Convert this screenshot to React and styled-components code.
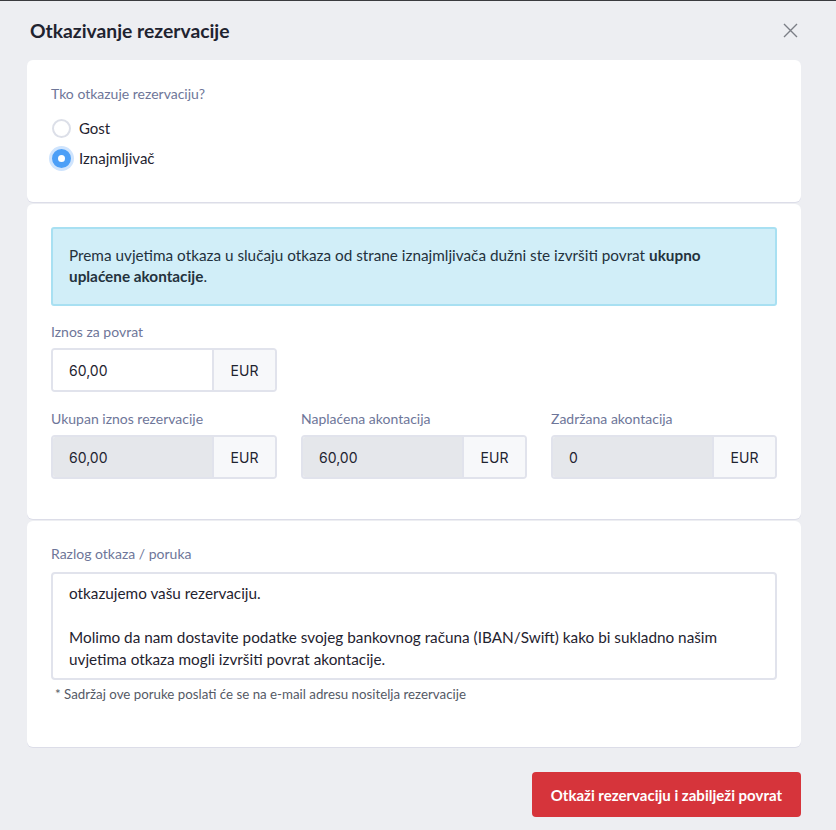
import React, { useState } from "react";
import styled, { createGlobalStyle } from "styled-components";

const GlobalStyle = createGlobalStyle`
  html, body {
    margin: 0;
    padding: 0;
    background: #edeef2;
  }
  body {
    font-family: Lato, "Open Sans", sans-serif;
    color: #1f2330;
    border-top: 1px solid #3a3b3f;
  }
  * { box-sizing: border-box; }
`;

const Modal = styled.div`
  width: 836px;
  min-height: 829px;
  padding: 0 35px 0 27px;
`;

const Header = styled.div`
  display: flex;
  align-items: center;
  justify-content: space-between;
  height: 59px;
  padding: 0 0 0 3px;
`;

const Title = styled.h2`
  margin: 0;
  font-size: 19.3px;
  font-weight: 700;
  color: #1f2330;
`;

const CloseButton = styled.button`
  background: none;
  border: none;
  padding: 0;
  margin: 0 3px 1px 0;
  width: 16px;
  height: 16px;
  cursor: pointer;
  display: flex;
  align-items: center;
  justify-content: center;
`;

const Card = styled.section`
  background: #fff;
  border-radius: 6px;
  box-shadow: 0 1px 0 #dcdde8;
  margin-bottom: 2px;
  padding: ${(p) => p.$pad || "24px"};
  min-height: ${(p) => p.$h}px;
`;

const Label = styled.div`
  font-size: 14px;
  color: #6e7699;
  margin-bottom: ${(p) => p.$mb || 7}px;
  line-height: 18px;
`;

const RadioList = styled.div`
  display: flex;
  flex-direction: column;
  gap: 10px;
`;

const RadioRow = styled.label`
  display: flex;
  align-items: center;
  gap: 8px;
  font-size: 15px;
  color: #1f2330;
  cursor: pointer;
  height: 20px;
`;

const RadioDot = styled.span`
  width: 19px;
  height: 19px;
  margin-left: 1px;
  border-radius: 50%;
  border: 2px solid ${(p) => (p.$on ? "#4c9ff7" : "#dcdfe8")};
  background: ${(p) => (p.$on ? "#4c9ff7" : "#fff")};
  box-shadow: ${(p) => (p.$on ? "0 0 0 3px #cfe4fd" : "none")};
  display: flex;
  align-items: center;
  justify-content: center;
  &::after {
    content: "";
    width: 7px;
    height: 7px;
    border-radius: 50%;
    background: #fff;
    display: ${(p) => (p.$on ? "block" : "none")};
  }
`;

const Alert = styled.div`
  background: #d1eef8;
  border: 2px solid #a8e0f2;
  border-radius: 3px;
  padding: 16px 40px 17px 16px;
  font-size: 15.3px;
  line-height: 21px;
  color: #24323d;
  margin-bottom: 17px;
  b { font-weight: 700; }
`;

const Field = styled.div`
  display: flex;
  flex-direction: column;
  min-width: 0;
  width: ${(p) => (p.$w ? `${p.$w}px` : "auto")};
`;

const InputGroup = styled.div`
  display: flex;
  height: 44px;
  border: 2px solid #e1e3ec;
  border-radius: 4px;
  overflow: hidden;
`;

const Input = styled.input`
  flex: 1;
  width: 0;
  min-width: 0;
  border: none;
  outline: none;
  padding: 0 16px;
  font-family: Inter, "Open Sans", sans-serif;
  font-size: 14px;
  color: #1f2330;
  background: ${(p) => (p.readOnly ? "#e5e7eb" : "#fff")};
`;

const Addon = styled.span`
  width: 63px;
  flex-shrink: 0;
  border-left: 2px solid #e1e3ec;
  background: #f7f8fa;
  display: flex;
  align-items: center;
  justify-content: center;
  font-family: Inter, "Open Sans", sans-serif;
  font-size: 14px;
  color: #1f2330;
`;

const Grid = styled.div`
  display: grid;
  grid-template-columns: repeat(3, minmax(0, 1fr));
  gap: 24px;
  margin-top: 18px;
`;

const TextArea = styled.textarea`
  width: 100%;
  height: 108px;
  border: 2px solid #e1e3ec;
  border-radius: 4px;
  padding: 8px 16px;
  font-family: Lato, "Open Sans", sans-serif;
  font-size: 15.3px;
  line-height: 22px;
  color: #1f2330;
  resize: none;
  outline: none;
  display: block;
`;

const Note = styled.div`
  font-size: 13.3px;
  line-height: 16px;
  color: #555a66;
  margin: 6px 0 0 4px;
`;

const Footer = styled.div`
  display: flex;
  justify-content: flex-end;
  padding-top: 23px;
`;

const DangerButton = styled.button`
  background: #d6343b;
  color: #fff;
  border: none;
  border-radius: 4px;
  height: 45px;
  padding: 0 19px;
  font-family: Lato, "Open Sans", sans-serif;
  font-size: 15px;
  font-weight: 700;
  cursor: pointer;
`;

const MoneyField = ({ label, value, readOnly, width }) => (
  <Field $w={width}>
    <Label>{label}</Label>
    <InputGroup>
      <Input defaultValue={value} readOnly={readOnly} />
      <Addon>EUR</Addon>
    </InputGroup>
  </Field>
);

const message =
  "otkazujemo vašu rezervaciju.\n\nMolimo da nam dostavite podatke svojeg bankovnog računa (IBAN/Swift) kako bi sukladno našim uvjetima otkaza mogli izvršiti povrat akontacije.";

export default function App() {
  const [who, setWho] = useState("iznajmljivac");

  return (
    <>
      <GlobalStyle />
      <Modal>
        <Header>
          <Title>Otkazivanje rezervacije</Title>
          <CloseButton aria-label="Zatvori">
            <svg width="15" height="15" viewBox="0 0 15 15">
              <path d="M1 1L14 14M14 1L1 14" stroke="#7b7e86" strokeWidth="1.4" />
            </svg>
          </CloseButton>
        </Header>

        <Card $h={142} $pad="25px 24px 20px">
          <Label $mb={15}>Tko otkazuje rezervaciju?</Label>
          <RadioList>
            <RadioRow onClick={() => setWho("gost")}>
              <RadioDot $on={who === "gost"} />
              Gost
            </RadioRow>
            <RadioRow onClick={() => setWho("iznajmljivac")}>
              <RadioDot $on={who === "iznajmljivac"} />
              Iznajmljivač
            </RadioRow>
          </RadioList>
        </Card>

        <Card $h={315} $pad="23px 24px 24px">
          <Alert>
            Prema uvjetima otkaza u slučaju otkaza od strane iznajmljivača dužni ste izvršiti povrat{" "}
            <b>ukupno uplaćene akontacije</b>.
          </Alert>
          <MoneyField label="Iznos za povrat" value="60,00" width={226} />
          <Grid>
            <MoneyField label="Ukupan iznos rezervacije" value="60,00" readOnly />
            <MoneyField label="Naplaćena akontacija" value="60,00" readOnly />
            <MoneyField label="Zadržana akontacija" value="0" readOnly />
          </Grid>
        </Card>

        <Card $h={226} $pad="24px 24px 24px">
          <Label $mb={9}>Razlog otkaza / poruka</Label>
          <TextArea defaultValue={message} />
          <Note>* Sadržaj ove poruke poslati će se na e-mail adresu nositelja rezervacije</Note>
        </Card>

        <Footer>
          <DangerButton>Otkaži rezervaciju i zabilježi povrat</DangerButton>
        </Footer>
      </Modal>
    </>
  );
}
